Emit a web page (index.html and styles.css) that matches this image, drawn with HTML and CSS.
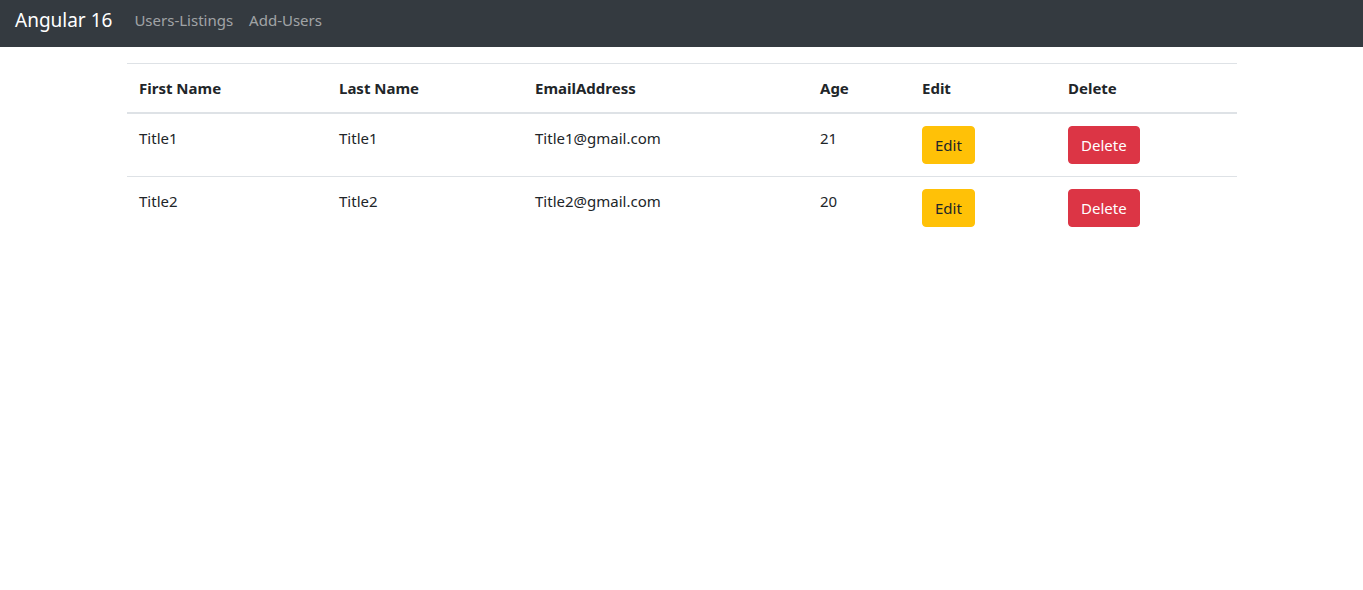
FILE: index.html
```html
<!DOCTYPE html>
<html>
<head>
<meta charset="utf-8">
<link rel="stylesheet" href="styles.css">
</head>
<body>
<nav class="navbar">
  <a class="brand" href="#">Angular 16</a>
  <ul class="nav-links">
    <li><a href="#">Users-Listings</a></li>
    <li><a href="#">Add-Users</a></li>
  </ul>
</nav>
<main class="container">
  <table class="table">
    <thead>
      <tr>
        <th class="c1">First Name</th>
        <th class="c2">Last Name</th>
        <th class="c3">EmailAddress</th>
        <th class="c4">Age</th>
        <th class="c5">Edit</th>
        <th class="c6">Delete</th>
      </tr>
    </thead>
    <tbody>
      <tr>
        <td>Title1</td>
        <td>Title1</td>
        <td>Title1@gmail.com</td>
        <td>21</td>
        <td><button class="btn btn-warning">Edit</button></td>
        <td><button class="btn btn-danger">Delete</button></td>
      </tr>
      <tr>
        <td>Title2</td>
        <td>Title2</td>
        <td>Title2@gmail.com</td>
        <td>20</td>
        <td><button class="btn btn-warning">Edit</button></td>
        <td><button class="btn btn-danger">Delete</button></td>
      </tr>
    </tbody>
  </table>
</main>
</body>
</html>
```
FILE: styles.css
```css
* { box-sizing: border-box; }
html, body {
  margin: 0;
  padding: 0;
  background: #fff;
  font-family: "Noto Sans", "Open Sans", sans-serif;
  font-size: 16px;
  line-height: 1.5;
  color: #212529;
}
.navbar {
  display: flex;
  align-items: flex-start;
  background: #343a40;
  padding: 5px 16px 0 15px;
  height: 47px;
}
.brand {
  color: #fff;
  text-decoration: none;
  font-size: 19px;
  line-height: 30px;
  margin-right: 14px;
}
.nav-links {
  display: flex;
  list-style: none;
  margin: 0;
  padding: 0;
}
.nav-links a {
  display: block;
  padding: 3px 8px;
  color: rgba(255,255,255,.55);
  text-decoration: none;
  font-size: 15px;
  line-height: 24px;
}
.container {
  width: 1110px;
  margin: 16px auto 0;
}
.table {
  width: 1110px;
  border-collapse: collapse;
  table-layout: fixed;
}
.table th, .table td {
  padding: 12px 12px 12px 12.5px;
  text-align: left;
  vertical-align: top;
  border-top: 1px solid #dee2e6;
  font-size: 15px;
  line-height: 24px;
}
.table th { font-weight: 700; }
.table thead th { border-bottom: 2px solid #dee2e6; }
.c1 { width: 200px; }
.c2 { width: 196px; }
.c3 { width: 285px; }
.c4 { width: 102px; }
.c5 { width: 146px; }
.c6 { width: 181px; }
.btn {
  display: inline-block;
  font-family: inherit;
  font-size: 15px;
  line-height: 24px;
  padding: 6px 12px;
  height: 38px;
  border: 1px solid transparent;
  border-radius: 4px;
  cursor: pointer;
}
.btn-warning { background: #ffc107; border-color: #ffc107; color: #212529; }
.btn-danger { background: #dc3545; border-color: #dc3545; color: #fff; }
```
